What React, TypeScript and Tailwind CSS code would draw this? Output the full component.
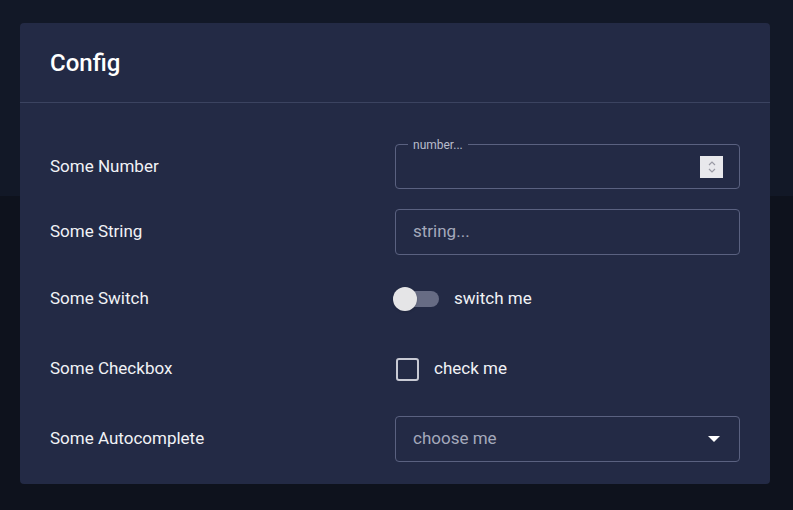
export default function App() {
  const font = { fontFamily: "Roboto, 'Noto Sans', sans-serif" };
  return (
    <div className="w-[793px] h-[510px] overflow-hidden bg-[linear-gradient(to_bottom,#121827_0px,#121827_196px,#0e121d_196px)] pt-[23px] px-[20px]" style={font}>
      <div className="w-[750px] h-[461px] bg-[#232a45] rounded-[4px] flex flex-col">
        <div className="h-[80px] flex items-center px-[30px] border-b border-[#3b4360]">
          <h1 className="text-[24px] font-medium text-white">Config</h1>
        </div>
        <div className="flex flex-col px-[30px] pt-[41px] text-[17px] text-[#f1f2f6]">
          <div className="flex items-center h-[45px]">
            <div className="w-[345px]">Some Number</div>
            <div className="relative w-[345px] h-[45px] border border-[#5a6180] rounded-[4px] flex items-center justify-end pr-[16px]">
              <span className="absolute -top-[9px] left-[12px] px-[5px] bg-[#232a45] text-[12px] text-[#b9bdcc]">number...</span>
              <div className="w-[23px] h-[22px] bg-[#e8e8ec] flex flex-col items-center justify-center">
                <svg width="10" height="16" viewBox="0 0 10 16" fill="none" stroke="#9a9aa5" strokeWidth="1.2"><path d="M2 6l3-3 3 3M2 10l3 3 3-3" /></svg>
              </div>
            </div>
          </div>
          <div className="flex items-center h-[46px] mt-[20px]">
            <div className="w-[345px]">Some String</div>
            <div className="w-[345px] h-[46px] border border-[#5a6180] rounded-[4px] flex items-center px-[17px] text-[#a4a9bb]">string...</div>
          </div>
          <div className="flex items-center h-[44px] mt-[22px]">
            <div className="w-[345px]">Some Switch</div>
            <div className="flex items-center">
              <div className="relative w-[46px] h-[24px] flex items-center">
                <div className="ml-[9px] w-[35px] h-[16px] rounded-full bg-[#676c84]"></div>
                <div className="absolute left-[-2px] top-0 w-[24px] h-[24px] rounded-full bg-[#e5e5e7] shadow"></div>
              </div>
              <span className="ml-[13px]">switch me</span>
            </div>
          </div>
          <div className="flex items-center h-[44px] mt-[26px]">
            <div className="w-[345px]">Some Checkbox</div>
            <div className="flex items-center">
              <div className="w-[23px] h-[23px] ml-[1px] border-2 border-[#c8cad4] rounded-[3px]"></div>
              <span className="ml-[15px]">check me</span>
            </div>
          </div>
          <div className="flex items-center h-[46px] mt-[25px]">
            <div className="w-[345px]">Some Autocomplete</div>
            <div className="w-[345px] h-[46px] border border-[#5a6180] rounded-[4px] flex items-center justify-between pl-[17px] pr-[19px] text-[#a4a9bb]">
              <span>choose me</span>
              <svg width="12" height="6" viewBox="0 0 12 6"><path d="M0 0h12L6 6z" fill="#ffffff" /></svg>
            </div>
          </div>
        </div>
      </div>
    </div>
  );
}
